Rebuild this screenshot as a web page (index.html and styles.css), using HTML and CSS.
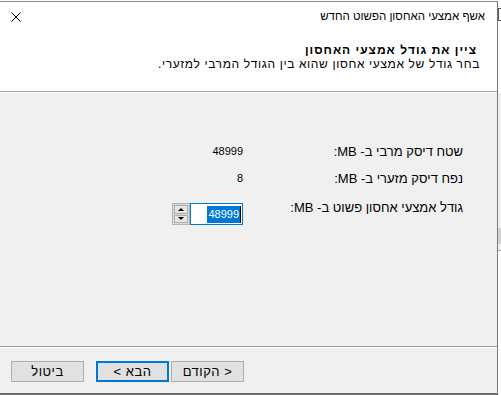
FILE: index.html
```html
<!DOCTYPE html>
<html lang="he">
<head>
<meta charset="utf-8">
<link rel="stylesheet" href="styles.css">
</head>
<body>
<div class="screen">
  <div class="dialog" dir="rtl">
    <div class="header">
      <div class="titlebar">
        <span class="title">אשף אמצעי האחסון הפשוט החדש</span>
        <span class="close"><svg width="10" height="10" viewBox="0 0 10 10"><path d="M0.5 0.5L9.5 9.5M9.5 0.5L0.5 9.5" stroke="#000" stroke-width="1" fill="none"/></svg></span>
      </div>
      <div class="heading">ציין את גודל אמצעי האחסון</div>
      <div class="subheading">בחר גודל של אמצעי אחסון שהוא בין הגודל המרבי למזערי.</div>
    </div>
    <div class="sep"></div>
    <div class="content">
      <div class="row"><span class="label">שטח דיסק מרבי ב- MB:</span><span class="value">48999</span></div>
      <div class="row row2"><span class="label">נפח דיסק מזערי ב- MB:</span><span class="value">8</span></div>
      <div class="row row3">
        <span class="label">גודל אמצעי אחסון פשוט ב- MB:</span>
        <div class="spinbox">
          <div class="spin">
            <div class="spin-btn"><span class="tri-up"></span></div>
            <div class="spin-btn"><span class="tri-down"></span></div>
          </div>
          <div class="edit"><span class="sel">48999</span><span class="caret"></span></div>
        </div>
      </div>
    </div>
    <div class="sep"></div>
    <div class="footer">
      <div class="btn">&lt; הקודם</div>
      <div class="btn btn-default">הבא &gt;</div>
      <div class="btn btn-cancel">ביטול</div>
    </div>
  </div>
  <div class="behind">
    <div class="bh-top"><div class="bh-bracket"></div></div>
    <div class="bh-mid"></div>
    <div class="bh-gray"></div>
    <div class="bh-light"></div>
    <div class="bh-line"></div>
    <div class="bh-bottom"></div>
  </div>
</div>
</body>
</html>
```
FILE: styles.css
```css
* { box-sizing: border-box; }
html, body { margin: 0; padding: 0; }
body {
  width: 501px;
  height: 395px;
  overflow: hidden;
  background: #ffffff;
  font-family: "Liberation Sans", "DejaVu Sans", sans-serif;
  font-size: 13px;
  color: #000;
}
.screen {
  display: flex;
  height: 395px;
}
.dialog {
  width: 498px;
  height: 394px;
  margin-top: 1px;
  border-top: 1px solid #8c8c8c;
  border-right: 1px solid #7a7a7a;
  border-bottom: 2px solid #6e6e6e;
  background: #f0f0f0;
  display: flex;
  flex-direction: column;
  flex: none;
}
.header {
  background: #ffffff;
  height: 89px;
  flex: none;
}
.titlebar {
  height: 30px;
  display: flex;
  justify-content: space-between;
  align-items: flex-start;
}
.title {
  margin-top: 7px;
  margin-right: 12px;
  line-height: 15px;
  font-size: 11.5px;
}
.close {
  margin-top: 10px;
  margin-left: 11px;
  width: 10px;
  height: 10px;
  display: block;
}
.close svg { display: block; }
.heading {
  margin-top: 12px;
  padding-right: 20px;
  font-size: 12px;
  font-weight: bold;
  line-height: 13px;
  letter-spacing: 1px;
}
.subheading {
  padding-right: 17px;
  font-size: 12px;
  line-height: 13px;
  letter-spacing: 0.63px;
  margin-top: 1px;
}
.sep {
  height: 2px;
  flex: none;
  border-top: 1px solid #a0a0a0;
  background: #ffffff;
}
.content {
  height: 253px;
  flex: none;
  padding-top: 51px;
  padding-right: 34px;
}
.row {
  display: flex;
  line-height: 15px;
}
.row2 { margin-top: 12px; }
.row3 { margin-top: 14px; }
.label {
  width: 220px;
  flex: none;
}
.value {
  font-size: 11px;
}
.spinbox {
  margin-top: 3px;
  width: 71px;
  height: 22px;
  display: flex;
  direction: ltr;
}
.spin {
  width: 18px;
  height: 22px;
  border: 1px solid #b4b4b4;
  background: #d9d9d9;
  padding: 1px;
  display: flex;
  flex-direction: column;
  gap: 1px;
}
.spin-btn {
  flex: 1;
  background: #e5e5e5;
  border: 1px solid #adadad;
  display: flex;
  align-items: center;
  justify-content: center;
}
.tri-up {
  width: 0; height: 0;
  border-left: 3px solid transparent;
  border-right: 3px solid transparent;
  border-bottom: 3px solid #000;
}
.tri-down {
  width: 0; height: 0;
  border-left: 3px solid transparent;
  border-right: 3px solid transparent;
  border-top: 3px solid #000;
}
.edit {
  flex: 1;
  height: 22px;
  border: 1px solid #0078d7;
  background: #ffffff;
  display: flex;
  justify-content: flex-end;
  align-items: center;
  padding-right: 1px;
}
.sel {
  background: #0078d7;
  color: #ffffff;
  font-size: 11px;
  line-height: 17px;
  height: 17px;
  padding: 0 1px;
}
.caret {
  width: 1px;
  height: 17px;
  background: #000;
}
.footer {
  flex: 1;
  display: flex;
  padding-top: 13px;
  padding-right: 253px;
  gap: 2px;
}
.btn {
  width: 73px;
  height: 21px;
  border: 1px solid #adadad;
  background: #e1e1e1;
  display: flex;
  align-items: center;
  justify-content: center;
  line-height: 15px;
  letter-spacing: 0.5px;
}
.btn-default {
  border: 2px solid #0078d7;
}
.btn-cancel {
  margin-right: 10px;
}
.behind {
  flex: 1;
  display: flex;
  flex-direction: column;
}
.bh-top {
  height: 93px;
  background: #ffffff;
  padding-top: 8px;
}
.bh-bracket {
  height: 13px;
  border: 1px solid #555;
  border-right: none;
}
.bh-mid { height: 135px; background: #f0f0f0; }
.bh-gray { height: 16px; background: #d4d4d4; }
.bh-light { height: 6px; background: #f0f0f0; }
.bh-line { height: 1px; background: #a0a0a0; }
.bh-bottom { flex: 1; background: #ffffff; }
```
